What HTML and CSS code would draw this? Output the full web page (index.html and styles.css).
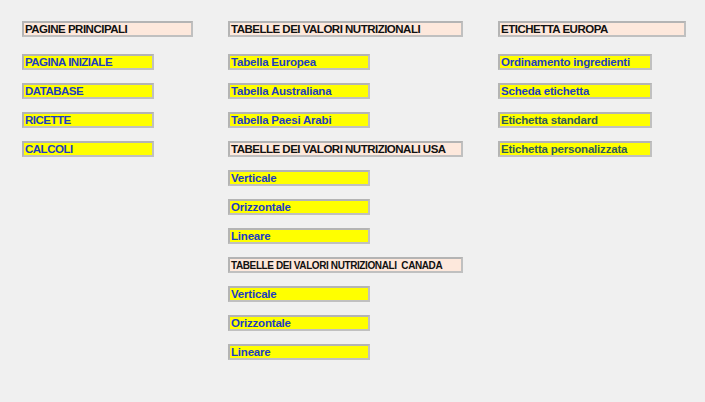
FILE: index.html
```html
<!DOCTYPE html>
<html lang="it">
<head>
<meta charset="utf-8">
<title>Menu principale</title>
<link rel="stylesheet" href="styles.css">
</head>
<body>
<main class="menu">
  <section class="col col-main">
    <div class="head first">PAGINE PRINCIPALI</div>
    <a class="btn caps w-main">PAGINA INIZIALE</a>
    <a class="btn caps w-main">DATABASE</a>
    <a class="btn caps w-main">RICETTE</a>
    <a class="btn caps w-main">CALCOLI</a>
  </section>
  <section class="col col-tab">
    <div class="head first">TABELLE DEI VALORI NUTRIZIONALI</div>
    <a class="btn w-tab">Tabella Europea</a>
    <a class="btn w-tab">Tabella Australiana</a>
    <a class="btn w-tab">Tabella Paesi Arabi</a>
    <div class="head">TABELLE DEI VALORI NUTRIZIONALI USA</div>
    <a class="btn w-tab">Verticale</a>
    <a class="btn w-tab">Orizzontale</a>
    <a class="btn w-tab">Lineare</a>
    <div class="head small">TABELLE DEI VALORI NUTRIZIONALI&nbsp; CANADA</div>
    <a class="btn w-tab">Verticale</a>
    <a class="btn w-tab">Orizzontale</a>
    <a class="btn w-tab">Lineare</a>
  </section>
  <section class="col col-eu">
    <div class="head first">ETICHETTA EUROPA</div>
    <a class="btn w-eu">Ordinamento ingredienti</a>
    <a class="btn w-eu">Scheda etichetta</a>
    <a class="btn w-eu muted">Etichetta standard</a>
    <a class="btn w-eu muted">Etichetta personalizzata</a>
  </section>
</main>
</body>
</html>
```

FILE: styles.css
```css
html, body {
  margin: 0;
  padding: 0;
  background: #f0f0f0;
  width: 705px;
  height: 402px;
  overflow: hidden;
}

body {
  font-family: "Liberation Sans", Arial, sans-serif;
  font-weight: bold;
  font-size: 11.5px;
}

.menu {
  display: flex;
  align-items: flex-start;
  gap: 35px;
  padding: 21px 0 0 22px;
}

.col {
  display: flex;
  flex-direction: column;
  align-items: flex-start;
  gap: 13px;
}

.col-main { width: 171px; }
.col-tab  { width: 235px; }
.col-eu   { width: 188px; }

.head,
.btn {
  box-sizing: border-box;
  height: 16px;
  line-height: 13px;
  padding: 0 0 0 1px;
  border: 2px solid #c0c0c0;
  border-top-color: #b4b4b4;
  border-left-color: #b4b4b4;
  white-space: nowrap;
  overflow: hidden;
  letter-spacing: -0.2px;
}

/* all-caps labels run tighter */
.head,
.caps {
  letter-spacing: -0.5px;
}

.head {
  width: 100%;
  background: #fde8dc;
  color: #111111;
}

.head.first {
  margin-bottom: 4px;
}

.head.small {
  font-size: 10px;
  letter-spacing: -0.4px;
}

.btn {
  display: block;
  background: #ffff00;
  color: #1c3cc4;
  text-decoration: none;
  cursor: pointer;
}

.btn.muted {
  color: #2f5a5a;
}

.w-main { width: 132px; }
.w-tab  { width: 142px; }
.w-eu   { width: 154px; }
```
